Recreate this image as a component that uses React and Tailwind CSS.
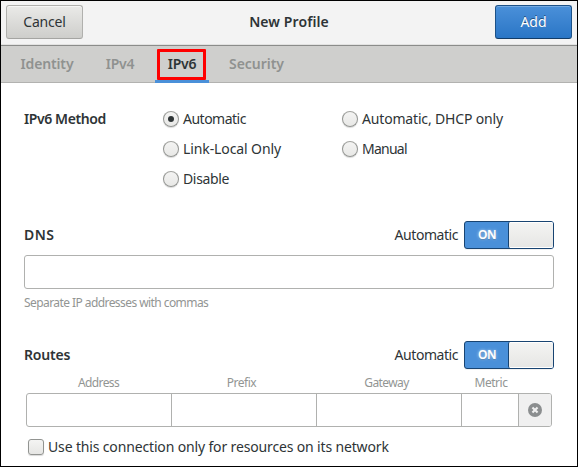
import React from "react";

const METHODS = [
  { label: "Automatic", checked: true, cls: "tracking-[-0.5px]" },
  { label: "Automatic, DHCP only", cls: "tracking-[-0.17px]" },
  { label: "Link-Local Only", cls: "tracking-[-0.1px]" },
  { label: "Manual", cls: "tracking-[-0.75px]" },
  { label: "Disable", cls: "tracking-[-0.35px]" },
];

function Radio({ label, checked, cls }) {
  return (
    <label className="flex h-[30px] items-center">
      <span className="flex size-4 shrink-0 items-center justify-center rounded-full border border-[#929491] border-t-[#a3a4a0] bg-linear-to-b from-[#f4f4f3] to-[#e8e8e6] shadow-[0_1px_1px_#00000026]">
        {checked && <span className="size-1.5 rounded-full bg-[#2e3436]" />}
      </span>
      <span className={"ml-1 whitespace-nowrap " + cls}>{label}</span>
    </label>
  );
}

function SectionHeader({ title, cls }) {
  return (
    <div className="flex h-7 items-center">
      <h2 className={"font-semibold " + cls}>{title}</h2>
      <span className="mr-1.5 ml-auto tracking-[-0.45px]">Automatic</span>
      <div className="flex h-7 w-[90px] rounded-[3px] border border-[#184472] bg-[#4a90d9] shadow-[0_1px_0_#0000000d]">
        <span className="flex flex-1 items-center justify-center pl-px text-[12px] font-semibold tracking-[-0.5px] text-white [text-shadow:0_0_3px_#ffffffb0,0_1px_1px_#00000040]">
          ON
        </span>
        <span className="w-[45px] rounded-[2px] border-l border-[#184472] bg-linear-to-b from-[#f4f4f3] to-[#e6e6e4] shadow-[inset_0_1px_0_#fff,inset_0_-1px_0_#fff]" />
      </div>
    </div>
  );
}

export default function App() {
  return (
    <div className="flex h-[467px] w-[578px] flex-col overflow-hidden border border-black bg-white font-['Noto_Sans',sans-serif] text-[14px] leading-5 text-[#2e3436]">
      <header className="flex h-[45px] shrink-0 items-start justify-between border-b border-[#8b8c8a] bg-[#f3f3f3] px-[5px] pt-1 shadow-[inset_0_-1px_0_#e2e2e1]">
        <button className="h-[34px] w-[77px] rounded-[3px] border border-[#b0b0ad] border-b-[#a5a5a2] bg-linear-to-b from-[#eaeae8] to-[#cececb] tracking-[-0.2px] shadow-[inset_0_1px_0_#f6f6f5]">
          Cancel
        </button>
        <h1 className="flex h-[34px] items-center font-semibold tracking-[0.1px]">New Profile</h1>
        <button className="h-[34px] w-[77px] rounded-[3px] border border-[#1c5187] border-b-[#123c68] bg-linear-to-b from-[#4a90d9] to-[#2a76c6] text-white shadow-[inset_0_1px_0_#74aae2] [text-shadow:0_-1px_0_#00000070]">
          Add
        </button>
      </header>

      <nav className="flex h-[37px] shrink-0 border-b border-[#b2b2b0] bg-[#cfcfcd] pl-[6px] font-semibold text-[#8f9290]">
        <span className="flex h-[35px] w-[80px] items-center justify-center tracking-[-0.15px]">Identity</span>
        <span className="flex h-[35px] w-[54px] items-center justify-center pl-[12px] tracking-[-0.3px]">IPv4</span>
        <span className="relative ml-[14px] flex h-[37px] w-[54px] items-center justify-center border-b-3 border-[#4a90d9] pt-px tracking-[-0.3px] text-[#2e3436]">
          IPv6
          <span className="absolute top-[3px] left-[2px] h-[31px] w-[49px] rounded-[1px] border-3 border-[#fe0000]" />
        </span>
        <span className="flex h-[35px] w-[95px] items-center justify-center tracking-[-0.05px]">Security</span>
      </nav>

      <main className="flex flex-1 flex-col pt-[21px] pr-[23px] pl-[23px]">
        <section className="flex">
          <h2 className="w-[139px] pt-[5px] font-semibold tracking-[-0.4px]">IPv6 Method</h2>
          <div className="grid grid-cols-[179px_auto]">
            {METHODS.map((m) => (
              <Radio key={m.label} {...m} />
            ))}
          </div>
        </section>

        <section className="mt-[27px]">
          <SectionHeader title="DNS" cls="tracking-[0.5px]" />
          <input className="mt-1.5 block h-[34px] w-full rounded-[3px] border border-[#b0b1af] bg-white px-2" />
          <p className="mt-1 h-5 text-[12px] tracking-[-0.57px] text-[#929593]">Separate IP addresses with commas</p>
        </section>

        <section className="mt-[28px]">
          <SectionHeader title="Routes" cls="tracking-[-0.2px]" />
          <div className="mt-1 flex h-5 pl-[2px] text-center text-[12px] text-[#929593]">
            <span className="w-[145px] tracking-[-0.6px]">Address</span>
            <span className="w-[145px] pr-1 tracking-[-0.5px]">Prefix</span>
            <span className="w-[145px] pr-1 tracking-[-0.6px]">Gateway</span>
            <span className="w-[58px] pl-[2px] tracking-[-0.5px]">Metric</span>
          </div>
          <div className="mx-[2px] flex h-[34px] overflow-hidden rounded-[3px] border border-[#b0b1af] bg-white">
            <input className="w-[145px] border-r border-[#b0b1af] px-2" />
            <input className="w-[145px] border-r border-[#b0b1af] px-2" />
            <input className="w-[145px] border-r border-[#b0b1af] px-2" />
            <input className="w-[57px] border-r border-[#b0b1af] px-2" />
            <button className="flex flex-1 items-center justify-center bg-[#f0f0f0]">
              <svg width="14" height="14" viewBox="0 0 14 14">
                <circle cx="7" cy="7" r="7" fill="#8b8e8f" />
                <path d="M5.2 5.2 8.8 8.8M8.8 5.2 5.2 8.8" stroke="#f0f0f0" strokeWidth="2.1" strokeLinecap="square" />
              </svg>
            </button>
          </div>
          <label className="mt-2.5 flex h-5 items-center pl-1">
            <span className="size-4 rounded-[3px] border border-[#929491] bg-linear-to-b from-[#f4f4f3] to-[#e6e6e4] shadow-[0_1px_1px_#00000026]" />
            <span className="ml-1 tracking-[-0.15px] whitespace-nowrap">
              Use this connection only for resources on its network
            </span>
          </label>
        </section>
      </main>
    </div>
  );
}
